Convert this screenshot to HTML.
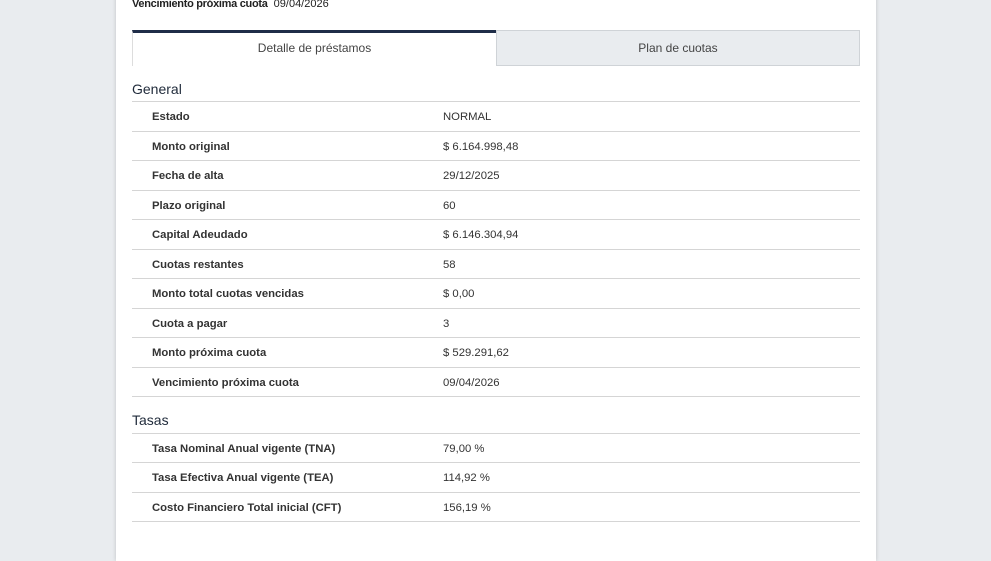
<!DOCTYPE html>
<html><head><meta charset="utf-8"><style>
*{margin:0;padding:0;box-sizing:border-box}
html{width:991px;height:561px;overflow:hidden}
body{width:991px;height:561px;background:#e9ecef;font-family:"Liberation Sans",sans-serif;overflow:hidden;position:relative;color:#333}
.panel{position:absolute;left:116px;top:-10px;width:760px;height:571px;background:#fff;box-shadow:0 0 4px rgba(0,0,0,.18)}
.top{position:absolute;left:132px;top:-2px;font-size:11px;color:#222}
.top b{font-weight:bold;letter-spacing:-.3px}
.tab{position:absolute;top:30px;height:36px;font-size:12px;text-align:center;line-height:34px;color:#444}
.t1{left:132px;width:364px;border-top:3px solid #1f2d48;border-left:1px solid #ddd;background:#fff;line-height:31px}
.t2{left:496px;width:364px;background:#e9ecef;border:1px solid #cfd3d7}
h2{position:absolute;left:132px;font-size:14px;font-weight:normal;color:#1f2a3a}
.row{position:absolute;left:132px;width:728px;border-top:1px solid #d5d5d5;font-size:11.3px}
.row span{position:absolute;left:20px;top:9px;font-weight:bold;color:#333}
.row i{position:absolute;left:311px;top:9px;font-style:normal;color:#333}
.last{position:absolute;left:132px;width:728px;border-top:1px solid #d5d5d5}
</style></head><body>
<div class="panel"></div>
<div class="top"><b>Vencimiento próxima cuota</b>&nbsp; 09/04/2026</div>
<div class="tab t1">Detalle de préstamos</div>
<div class="tab t2">Plan de cuotas</div>
<h2 style="top:81px">General</h2>
<div class="row" style="top:101px"><span>Estado</span><i>NORMAL</i></div>
<div class="row" style="top:131px"><span>Monto original</span><i>$ 6.164.998,48</i></div>
<div class="row" style="top:160px"><span>Fecha de alta</span><i>29/12/2025</i></div>
<div class="row" style="top:190px"><span>Plazo original</span><i>60</i></div>
<div class="row" style="top:219px"><span>Capital Adeudado</span><i>$ 6.146.304,94</i></div>
<div class="row" style="top:249px"><span>Cuotas restantes</span><i>58</i></div>
<div class="row" style="top:278px"><span>Monto total cuotas vencidas</span><i>$ 0,00</i></div>
<div class="row" style="top:308px"><span>Cuota a pagar</span><i>3</i></div>
<div class="row" style="top:337px"><span>Monto próxima cuota</span><i>$ 529.291,62</i></div>
<div class="row" style="top:367px"><span>Vencimiento próxima cuota</span><i>09/04/2026</i></div>
<div class="last" style="top:396px"></div>
<h2 style="top:412px">Tasas</h2>
<div class="row" style="top:433px"><span>Tasa Nominal Anual vigente (TNA)</span><i>79,00 %</i></div>
<div class="row" style="top:462px"><span>Tasa Efectiva Anual vigente (TEA)</span><i>114,92 %</i></div>
<div class="row" style="top:492px"><span>Costo Financiero Total inicial (CFT)</span><i>156,19 %</i></div>
<div class="last" style="top:521px"></div>
</body></html>
